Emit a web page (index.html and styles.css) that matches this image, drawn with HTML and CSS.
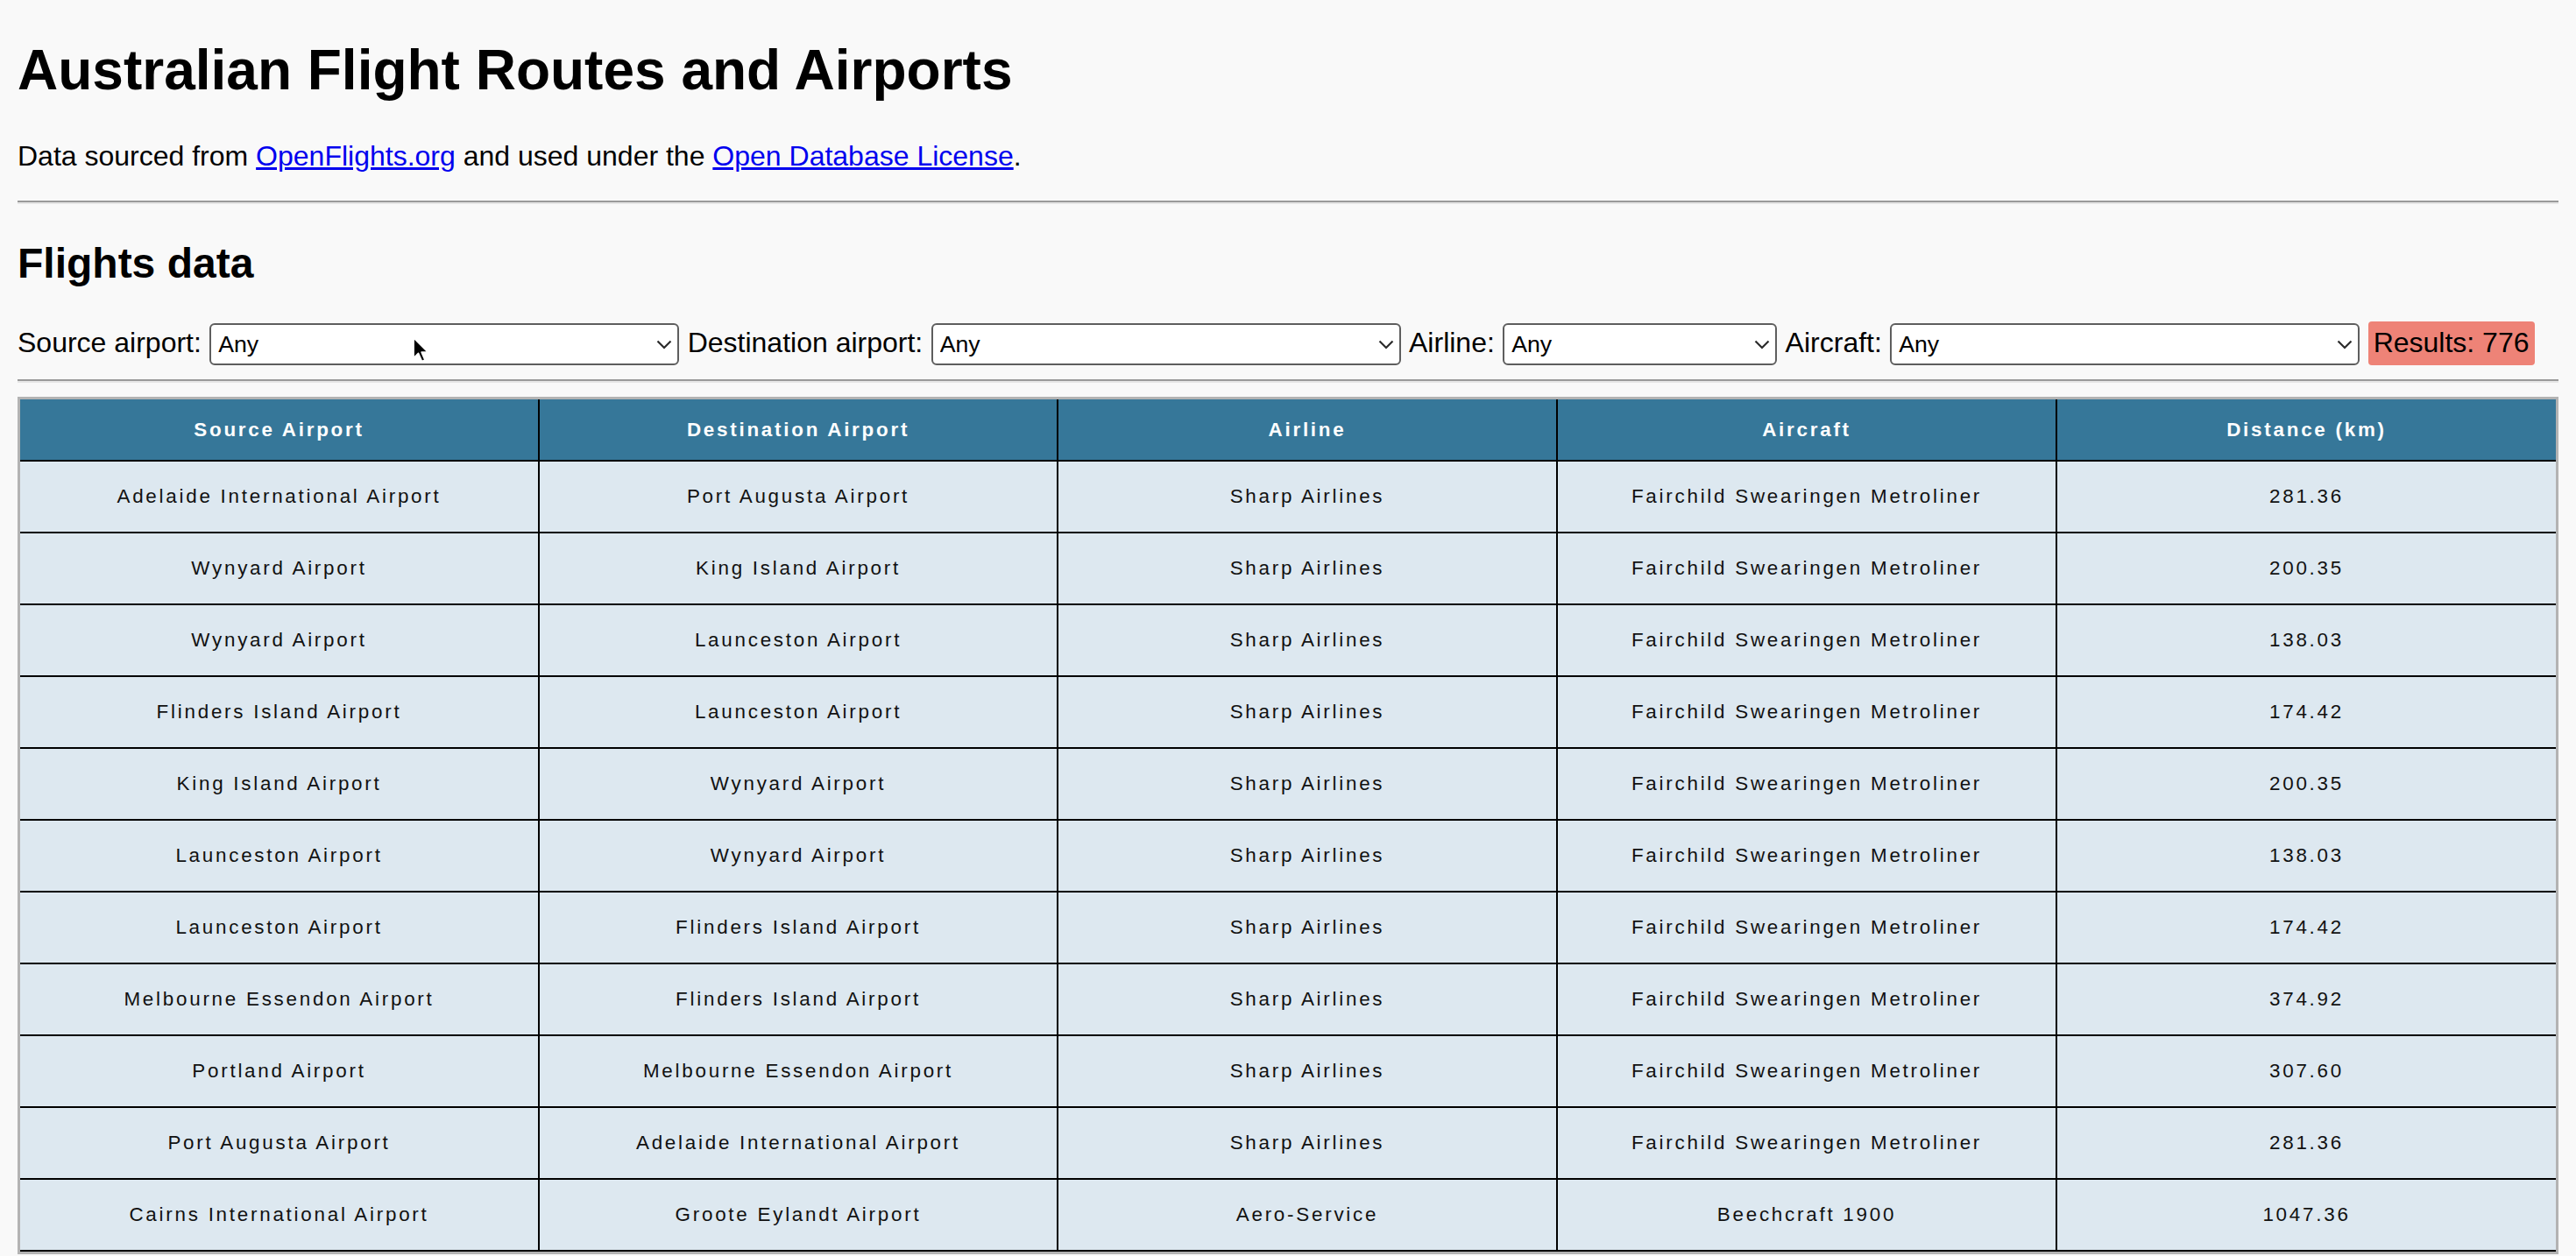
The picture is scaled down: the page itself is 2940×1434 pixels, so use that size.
FILE: index.html
```html
<!DOCTYPE html>
<html lang="en">
<head>
<meta charset="utf-8">
<title>Australian Flight Routes and Airports</title>
<link rel="stylesheet" href="styles.css">
</head>
<body>
<h1 class="title">Australian Flight Routes and Airports</h1>
<p class="intro">Data sourced from <a href="#">OpenFlights.org</a> and used under the <a href="#">Open Database License</a>.</p>
<hr class="rule">
<h2 class="subtitle">Flights data</h2>
<div class="filters">
  <label class="filter-label" for="src">Source airport:</label>
  <span class="select-wrap wide">
    <select id="src" class="select"><option>Any</option></select>
    <svg class="chev" viewBox="0 0 18 11" width="18" height="11"><polyline points="1.5,1.5 9,9 16.5,1.5" fill="none" stroke="#2b2b2b" stroke-width="2.2"/></svg>
  </span>
  <label class="filter-label" for="dst">Destination airport:</label>
  <span class="select-wrap wide">
    <select id="dst" class="select"><option>Any</option></select>
    <svg class="chev" viewBox="0 0 18 11" width="18" height="11"><polyline points="1.5,1.5 9,9 16.5,1.5" fill="none" stroke="#2b2b2b" stroke-width="2.2"/></svg>
  </span>
  <label class="filter-label" for="air">Airline:</label>
  <span class="select-wrap narrow">
    <select id="air" class="select"><option>Any</option></select>
    <svg class="chev" viewBox="0 0 18 11" width="18" height="11"><polyline points="1.5,1.5 9,9 16.5,1.5" fill="none" stroke="#2b2b2b" stroke-width="2.2"/></svg>
  </span>
  <label class="filter-label" for="acf">Aircraft:</label>
  <span class="select-wrap wide">
    <select id="acf" class="select"><option>Any</option></select>
    <svg class="chev" viewBox="0 0 18 11" width="18" height="11"><polyline points="1.5,1.5 9,9 16.5,1.5" fill="none" stroke="#2b2b2b" stroke-width="2.2"/></svg>
  </span>
  <span class="results">Results: 776</span>
  <svg class="cursor" viewBox="0 0 22 32" width="22" height="32"><path d="M2 1.5 L2 25 L7.5 19.5 L11.5 28.5 L15 27 L11.2 18.2 L18.5 18.2 Z" fill="#000" stroke="#fff" stroke-width="1.8" stroke-linejoin="round"/></svg>
</div>
<hr class="rule">
<table class="flights">
  <thead>
    <tr>
      <th class="col1">Source Airport</th>
      <th class="col2">Destination Airport</th>
      <th class="col3">Airline</th>
      <th class="col4">Aircraft</th>
      <th class="col5">Distance (km)</th>
    </tr>
  </thead>
  <tbody>
    <tr><td>Adelaide International Airport</td><td>Port Augusta Airport</td><td>Sharp Airlines</td><td>Fairchild Swearingen Metroliner</td><td>281.36</td></tr>
    <tr><td>Wynyard Airport</td><td>King Island Airport</td><td>Sharp Airlines</td><td>Fairchild Swearingen Metroliner</td><td>200.35</td></tr>
    <tr><td>Wynyard Airport</td><td>Launceston Airport</td><td>Sharp Airlines</td><td>Fairchild Swearingen Metroliner</td><td>138.03</td></tr>
    <tr><td>Flinders Island Airport</td><td>Launceston Airport</td><td>Sharp Airlines</td><td>Fairchild Swearingen Metroliner</td><td>174.42</td></tr>
    <tr><td>King Island Airport</td><td>Wynyard Airport</td><td>Sharp Airlines</td><td>Fairchild Swearingen Metroliner</td><td>200.35</td></tr>
    <tr><td>Launceston Airport</td><td>Wynyard Airport</td><td>Sharp Airlines</td><td>Fairchild Swearingen Metroliner</td><td>138.03</td></tr>
    <tr><td>Launceston Airport</td><td>Flinders Island Airport</td><td>Sharp Airlines</td><td>Fairchild Swearingen Metroliner</td><td>174.42</td></tr>
    <tr><td>Melbourne Essendon Airport</td><td>Flinders Island Airport</td><td>Sharp Airlines</td><td>Fairchild Swearingen Metroliner</td><td>374.92</td></tr>
    <tr><td>Portland Airport</td><td>Melbourne Essendon Airport</td><td>Sharp Airlines</td><td>Fairchild Swearingen Metroliner</td><td>307.60</td></tr>
    <tr><td>Port Augusta Airport</td><td>Adelaide International Airport</td><td>Sharp Airlines</td><td>Fairchild Swearingen Metroliner</td><td>281.36</td></tr>
    <tr><td>Cairns International Airport</td><td>Groote Eylandt Airport</td><td>Aero-Service</td><td>Beechcraft 1900</td><td>1047.36</td></tr>
  </tbody>
</table>
</body>
</html>
```

FILE: styles.css
```css
html {
  scrollbar-width: none;
  background: #f9f9f9;
}

body {
  margin: 0;
  padding: 0 20px;
  font-family: "Liberation Sans", Arial, Helvetica, sans-serif;
  color: #000;
  background: #f9f9f9;
}

.title {
  font-size: 64px;
  font-weight: bold;
  margin: 0 0 42.88px;
  padding-top: 42.88px;
}

.intro {
  font-size: 32px;
  margin: 32px 0;
}

.intro a {
  color: #0000ee;
  text-decoration: underline;
}

.rule {
  height: 0;
  border: 0;
  border-top: 2px solid #9a9a9a;
  border-bottom: 2px solid #e6e6e6;
  margin: 16px 0;
}

.subtitle {
  font-size: 48px;
  font-weight: bold;
  margin: 39.84px 0;
}

.filters {
  position: relative;
  display: flex;
  align-items: baseline;
  gap: 9.4px;
  font-size: 32px;
}

.filter-label {
  white-space: nowrap;
}

.select-wrap {
  position: relative;
  display: inline-flex;
}

.select-wrap.wide .select {
  width: 536px;
}

.select-wrap.narrow .select {
  width: 313px;
}

.select {
  -webkit-appearance: none;
  appearance: none;
  box-sizing: border-box;
  height: 48px;
  margin: 0;
  padding: 0 40px 0 8px;
  border: 2px solid #5e5e5e;
  border-radius: 6px;
  background: #fff;
  color: #000;
  font-family: "Liberation Sans", Arial, Helvetica, sans-serif;
  font-size: 26.67px;
}

.chev {
  position: absolute;
  right: 8px;
  top: 19px;
  pointer-events: none;
}

.results {
  display: inline-block;
  background: #ee8377;
  border-radius: 4px;
  padding: 6px 6px 7px;
  font-size: 32px;
  color: #000;
}

.cursor {
  position: absolute;
  left: 450px;
  top: 17px;
}

.flights {
  width: 100%;
  margin-top: 2px;
  table-layout: fixed;
  border: 3px solid #b3b3b3;
  border-spacing: 0;
  font-family: "Liberation Sans", Arial, Helvetica, sans-serif;
  font-size: 22.4px;
  line-height: 26px;
  letter-spacing: 2.75px;
  text-align: center;
}

.flights th {
  box-sizing: border-box;
  background: #367799;
  color: #fff;
  font-weight: bold;
  padding: 21.5px 0;
  border-right: 2px solid #000;
  border-bottom: 2px solid #000;
}

.flights td {
  background: #dde8f0;
  color: #111;
  padding: 27px 0;
  border-right: 2px solid #000;
  border-bottom: 2px solid #000;
}

.flights th:last-child,
.flights td:last-child {
  border-right: 0;
}

.col1 { width: 593px; }
.col2 { width: 592px; }
.col3 { width: 570px; }
.col4 { width: 570px; }
```
